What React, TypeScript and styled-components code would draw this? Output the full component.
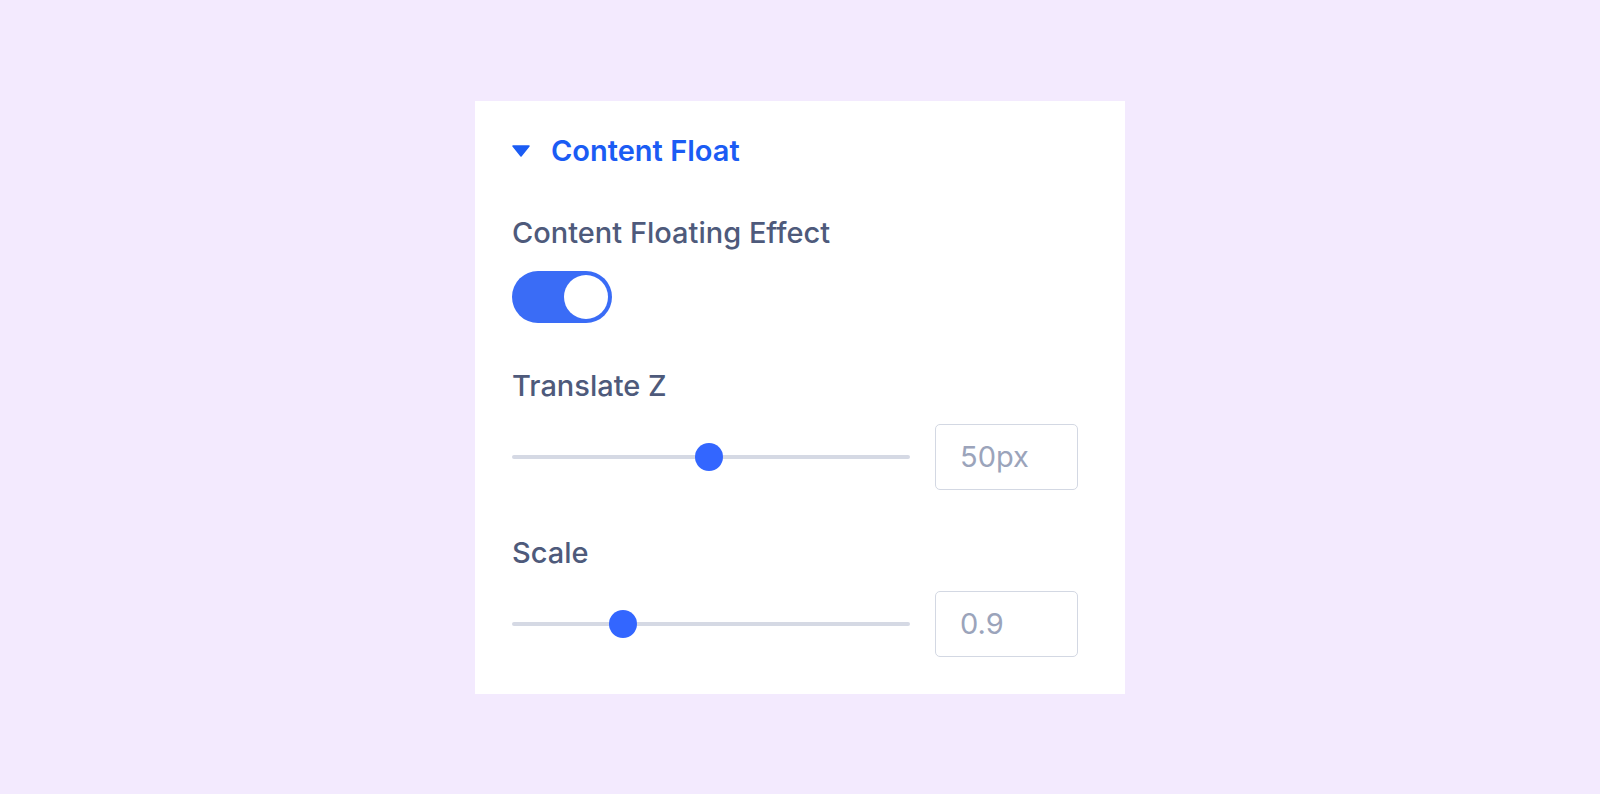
import React, { useState } from "react";
import styled, { createGlobalStyle } from "styled-components";

const GlobalStyle = createGlobalStyle`
  html, body {
    margin: 0;
    padding: 0;
    background: #f3eafe;
  }
  body {
    font-family: Inter, "Noto Sans", "Liberation Sans", sans-serif;
  }
`;

const Page = styled.div`
  display: flex;
  align-items: center;
  justify-content: center;
  width: 100%;
  height: 100vh;
`;

const Panel = styled.div`
  display: flex;
  flex-direction: column;
  width: 650px;
  box-sizing: border-box;
  padding: 34px 47px 37px 37px;
  background: #ffffff;
`;

const Header = styled.button`
  display: flex;
  align-items: center;
  gap: 21px;
  padding: 0;
  border: none;
  background: none;
  cursor: pointer;
  font-family: inherit;
  margin-bottom: 50px;
`;

const Title = styled.span`
  font-size: 29px;
  line-height: 32px;
  font-weight: 600;
  color: #1b5cf4;
`;

const Section = styled.div`
  display: flex;
  flex-direction: column;
  align-items: flex-start;
  gap: 22px;
  & + & {
    margin-top: 47px;
  }
`;

const Label = styled.div`
  font-size: 29px;
  line-height: 32px;
  font-weight: 500;
  color: #4e5a7b;
`;

const Toggle = styled.button<{ on: boolean }>`
  position: relative;
  width: 100px;
  height: 52px;
  padding: 0;
  border: none;
  border-radius: 26px;
  background: ${({ on }) => (on ? "#3a6cf6" : "#d5d9e4")};
  cursor: pointer;
`;

const Knob = styled.span<{ on: boolean }>`
  position: absolute;
  top: 4px;
  left: ${({ on }) => (on ? "52px" : "4px")};
  width: 44px;
  height: 44px;
  border-radius: 50%;
  background: #ffffff;
  transition: left 0.15s ease;
`;

const Row = styled.div`
  display: flex;
  align-items: center;
  gap: 25px;
  width: 100%;
`;

const Track = styled.div`
  position: relative;
  flex: 1;
  height: 4px;
  border-radius: 2px;
  background: #d5d9e4;
`;

const Thumb = styled.span`
  position: absolute;
  top: 50%;
  width: 28px;
  height: 28px;
  margin-left: -14px;
  margin-top: -14px;
  border-radius: 50%;
  background: #3366ff;
`;

const ValueBox = styled.div`
  display: flex;
  align-items: center;
  width: 143px;
  height: 66px;
  box-sizing: border-box;
  padding-left: 24px;
  border: 1.5px solid #d3d8e3;
  border-radius: 5px;
  font-size: 29px;
  color: #9ba4bb;
`;

function Caret() {
  return (
    <svg width="18" height="12" viewBox="0 0 18 12">
      <path d="M1 1 L17 1 L9 11 Z" fill="#1b5cf4" strokeLinejoin="round" stroke="#1b5cf4" strokeWidth="1.5" />
    </svg>
  );
}

function SliderRow({ position, value }: { position: number; value: string }) {
  return (
    <Row>
      <Track>
        <Thumb style={{ left: `${position}%` }} />
      </Track>
      <ValueBox>{value}</ValueBox>
    </Row>
  );
}

export default function App() {
  const [floating, setFloating] = useState(true);

  return (
    <>
      <GlobalStyle />
      <Page>
        <Panel>
          <Header>
            <Caret />
            <Title>Content Float</Title>
          </Header>
          <Section>
            <Label>Content Floating Effect</Label>
            <Toggle on={floating} onClick={() => setFloating((prev) => !prev)}>
              <Knob on={floating} />
            </Toggle>
          </Section>
          <Section>
            <Label>Translate Z</Label>
            <SliderRow position={49.5} value="50px" />
          </Section>
          <Section>
            <Label>Scale</Label>
            <SliderRow position={28} value="0.9" />
          </Section>
        </Panel>
      </Page>
    </>
  );
}
